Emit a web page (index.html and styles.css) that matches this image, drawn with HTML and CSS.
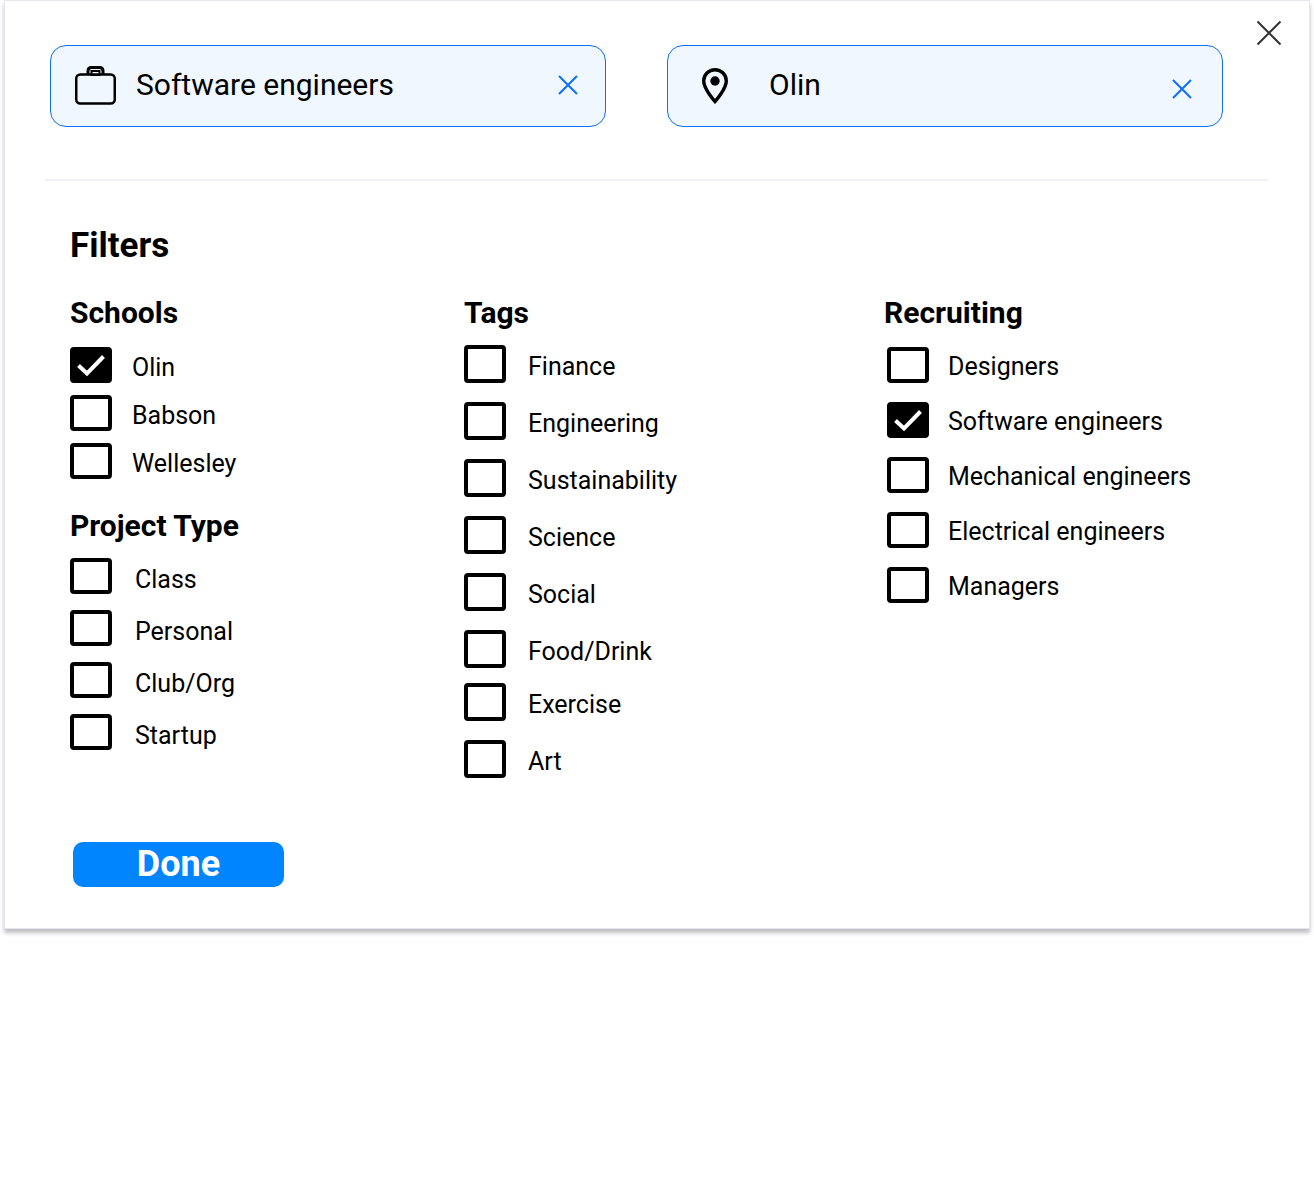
FILE: index.html
```html
<!DOCTYPE html>
<html lang="en">
<head>
  <meta charset="utf-8">
  <meta name="viewport" content="width=device-width, initial-scale=1">
  <title>Filters</title>
  <link rel="stylesheet" href="styles.css">
</head>
<body>
  <form class="panel">
    <header class="search">
      <div class="fields">
        <div class="field field-role">
          <svg class="field-icon" width="42" height="40" viewBox="0 0 42 40" fill="none" stroke="#000" aria-hidden="true">
            <rect x="1.250" y="9.500" width="38.500" height="29" rx="4" stroke-width="2.500"/>
            <path d="M13 10V6Q13 2.500 16.500 2.500H24.500Q28 2.500 28 6V10" stroke-width="3"/>
            <rect x="16.500" y="6" width="8" height="4" stroke-width="2"/>
          </svg>
          <input class="field-input" type="text" value="Software engineers" aria-label="Role">
          <button class="clear" type="button" aria-label="Clear role">
            <svg width="20" height="20" viewBox="0 0 20 20" fill="none" stroke="#0d6efd" stroke-width="2"><path d="M1 1L19 19M19 1L1 19"/></svg>
          </button>
        </div>
        <div class="field field-place">
          <svg class="field-icon" width="26" height="36" viewBox="0 0 26 36" aria-hidden="true">
            <path d="M13 2.700C6.600 2.700 1.700 7.700 1.700 14C1.700 22 13 34.500 13 34.500S24.300 22 24.300 14C24.300 7.700 19.400 2.700 13 2.700Z" fill="none" stroke="#000" stroke-width="3.400"/>
            <circle cx="13" cy="14" r="4.700"/>
          </svg>
          <input class="field-input" type="text" value="Olin" aria-label="Location">
          <button class="clear" type="button" aria-label="Clear location">
            <svg width="20" height="28" viewBox="0 0 20 28" fill="none" stroke="#0d6efd" stroke-width="2"><path d="M1 9L19 27M19 9L1 27"/></svg>
          </button>
        </div>
      </div>
      <button class="close" type="button" aria-label="Close">
        <svg width="24" height="24" viewBox="0 0 24 24" fill="none" stroke="#333" stroke-width="2"><path d="M.5 .5L23.500 23.500M23.500 .5L.5 23.500"/></svg>
      </button>
    </header>
    <hr class="divider">
    <main class="filters">
      <h1 class="title">Filters</h1>
      <div class="columns">
        <div class="column">
          <fieldset class="group schools">
            <legend class="heading">Schools</legend>
            <ul class="options">
              <li><label class="option"><input class="box" type="checkbox" checked><span>Olin</span></label></li>
              <li><label class="option"><input class="box" type="checkbox"><span>Babson</span></label></li>
              <li><label class="option"><input class="box" type="checkbox"><span>Wellesley</span></label></li>
            </ul>
          </fieldset>
          <fieldset class="group projects">
            <legend class="heading">Project Type</legend>
            <ul class="options">
              <li><label class="option"><input class="box" type="checkbox"><span>Class</span></label></li>
              <li><label class="option"><input class="box" type="checkbox"><span>Personal</span></label></li>
              <li><label class="option"><input class="box" type="checkbox"><span>Club/Org</span></label></li>
              <li><label class="option"><input class="box" type="checkbox"><span>Startup</span></label></li>
            </ul>
          </fieldset>
        </div>
        <fieldset class="group tags">
          <legend class="heading">Tags</legend>
          <ul class="options">
            <li><label class="option"><input class="box" type="checkbox"><span>Finance</span></label></li>
            <li><label class="option"><input class="box" type="checkbox"><span>Engineering</span></label></li>
            <li><label class="option"><input class="box" type="checkbox"><span>Sustainability</span></label></li>
            <li><label class="option"><input class="box" type="checkbox"><span>Science</span></label></li>
            <li><label class="option"><input class="box" type="checkbox"><span>Social</span></label></li>
            <li><label class="option"><input class="box" type="checkbox"><span>Food/Drink</span></label></li>
          </ul>
          <ul class="options">
            <li><label class="option"><input class="box" type="checkbox"><span>Exercise</span></label></li>
            <li><label class="option"><input class="box" type="checkbox"><span>Art</span></label></li>
          </ul>
        </fieldset>
        <fieldset class="group recruiting">
          <legend class="heading">Recruiting</legend>
          <ul class="options">
            <li><label class="option"><input class="box" type="checkbox"><span>Designers</span></label></li>
            <li><label class="option"><input class="box" type="checkbox" checked><span>Software engineers</span></label></li>
            <li><label class="option"><input class="box" type="checkbox"><span>Mechanical engineers</span></label></li>
            <li><label class="option"><input class="box" type="checkbox"><span>Electrical engineers</span></label></li>
            <li><label class="option"><input class="box" type="checkbox"><span>Managers</span></label></li>
          </ul>
        </fieldset>
      </div>
      <button class="done" type="submit">Done</button>
    </main>
  </form>
</body>
</html>
```

FILE: styles.css
```css
* {
  box-sizing: border-box;
}

body {
  min-height: 100vh;
  margin: 0;
  padding: 0 4px 16px;
  background: #fff;
  color: #000;
  font-family: Roboto, "Liberation Sans", sans-serif;
}

button,
input {
  margin: 0;
  padding: 0;
  border: 0;
  background: none;
  color: inherit;
  font: inherit;
}

button {
  cursor: pointer;
}

svg {
  display: block;
  overflow: visible;
}

.panel {
  padding-bottom: 41px;
  border: 1px solid #e4e5ee;
  background: #fff;
  box-shadow: 0 4px 4px rgba(0, 0, 0, 0.25);
}

/* Search fields */

.search {
  display: flex;
  align-items: flex-start;
  gap: 34px;
  padding: 20px 28px 0 45px;
}

.fields {
  display: grid;
  flex: 1;
  grid-template-columns: repeat(2, minmax(0, 1fr));
  gap: 61px;
  padding-top: 24px;
}

.field {
  display: flex;
  align-items: center;
  height: 82px;
  border: 1px solid #0d6efd;
  border-radius: 16px;
  background: #f0f7ff;
}

.field-role {
  gap: 19px;
  padding: 0 27px 2px 24px;
}

.field-place {
  gap: 41px;
  padding: 0 30px 2px 34px;
}

.field-icon {
  flex: none;
}

.field-input {
  flex: 1;
  min-width: 0;
  height: 40px;
  padding-bottom: 2px;
  font-size: 30px;
}

.clear,
.close {
  flex: none;
}

.divider {
  height: 2px;
  margin: 52px 41px 0 40px;
  border: 0;
  background: #f2f1f6;
}

/* Filters */

.filters {
  padding: 44px 0 0 65px;
}

.title {
  margin: 0 0 28px;
  font-size: 35px;
  font-weight: 700;
  line-height: 42px;
}

.columns {
  display: grid;
  grid-template-columns: 394fr 420fr 425fr;
}

.group {
  min-width: 0;
  margin: 0;
  padding: 0;
  border: 0;
}

.heading {
  padding: 0;
  font-size: 30px;
  font-weight: 700;
  line-height: 36px;
}

.options {
  display: flex;
  flex-direction: column;
  margin: 0;
  padding: 0;
  list-style: none;
}

.option {
  display: flex;
  align-items: center;
  height: 36px;
  font-size: 25px;
  line-height: 30px;
}

.box {
  flex: none;
  width: 42px;
  height: 100%;
  border: 4px solid #000;
  border-radius: 4px;
  background: #fff;
  appearance: none;
}

.box:checked {
  background: #000 url("data:image/svg+xml,%3Csvg xmlns='http://www.w3.org/2000/svg' viewBox='0 0 34 28' fill='none' stroke='white' stroke-width='4'%3E%3Cpath d='M4.500 14.500L13 22.500L29.500 5.500'/%3E%3C/svg%3E") center / 34px 28px no-repeat;
}

.schools .options {
  gap: 12px;
  padding-top: 16px;
}

.schools .option {
  gap: 20px;
}

.schools span,
.tags span {
  padding-top: 6px;
}

.projects {
  margin-top: 29px;
}

.projects .options {
  gap: 16px;
  padding-top: 14px;
}

.projects .option {
  gap: 23px;
}

.projects span {
  padding-top: 8px;
}

.tags .options {
  gap: 19px;
  padding-top: 14px;
}

.tags .options + .options {
  padding-top: 15px;
}

.tags .option {
  height: 38px;
  gap: 22px;
}

.recruiting .options {
  gap: 19px;
  padding: 16px 0 0 3px;
}

.recruiting .option {
  gap: 19px;
}

.recruiting span {
  padding-top: 4px;
}

.done {
  display: block;
  width: 211px;
  height: 45px;
  margin: 64px 0 0 3px;
  padding-bottom: 2px;
  border-radius: 10px;
  background: #0085ff;
  color: #fff;
  font-size: 36px;
  font-weight: 700;
  line-height: 42px;
}
```
